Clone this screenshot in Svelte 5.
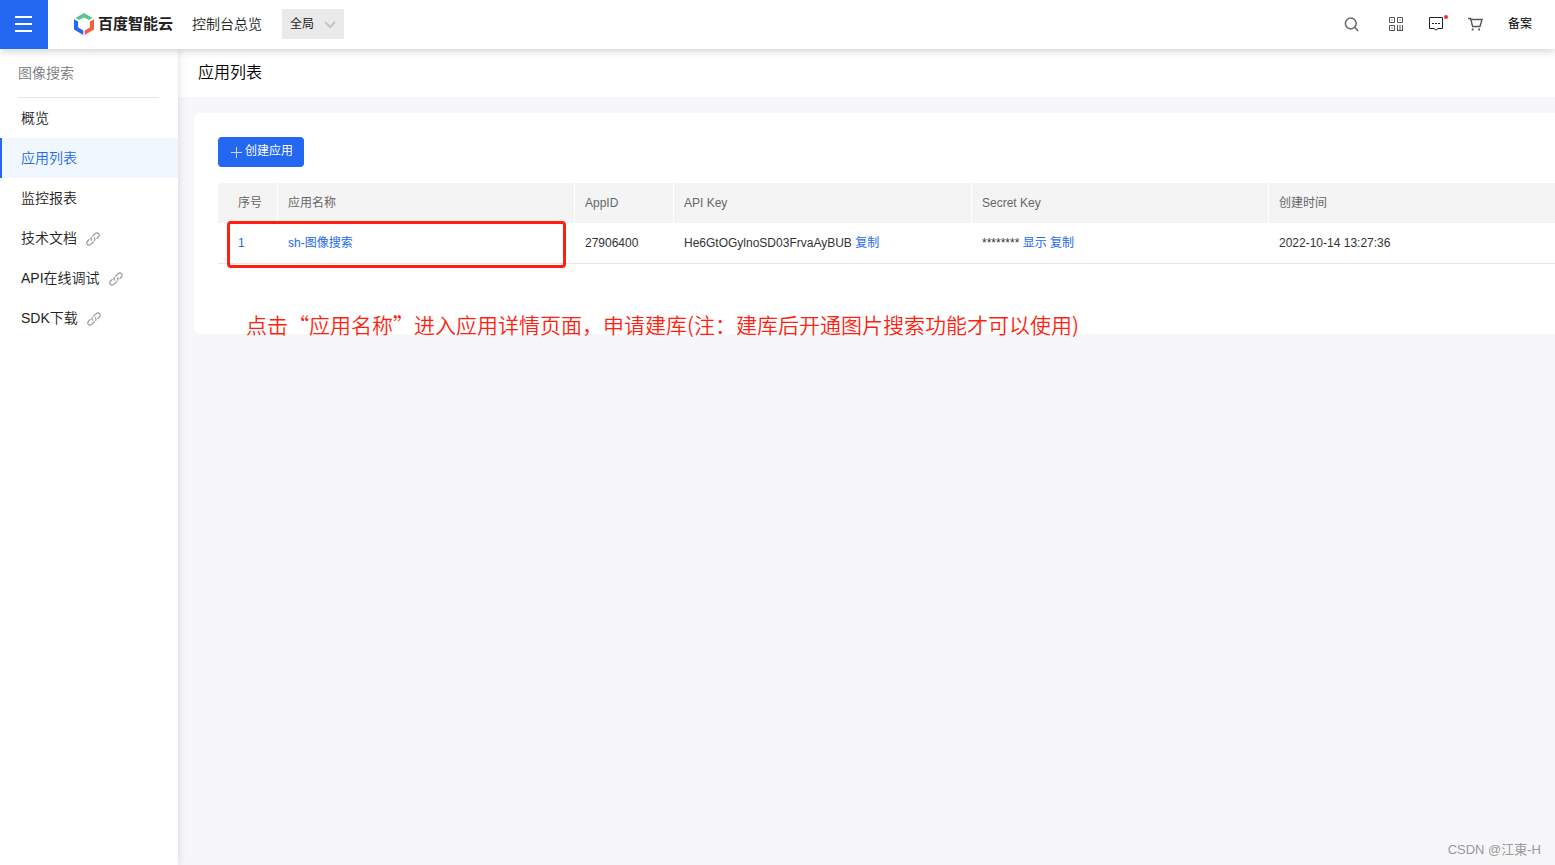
<script lang="ts">
  const menu = [
    { label: '概览', external: false },
    { label: '应用列表', external: false },
    { label: '监控报表', external: false },
    { label: '技术文档', external: true },
    { label: 'API在线调试', external: true },
    { label: 'SDK下载', external: true }
  ];

  const columns = [
    { label: '序号', cls: 'c-index' },
    { label: '应用名称', cls: 'c-name' },
    { label: 'AppID', cls: 'c-appid' },
    { label: 'API Key', cls: 'c-key' },
    { label: 'Secret Key', cls: 'c-secret' },
    { label: '创建时间', cls: 'c-time' }
  ];

  const apps = [
    { id: 1, name: 'sh-图像搜索', appId: '27906400', apiKey: 'He6GtOGylnoSD03FrvaAyBUB', secret: '********', created: '2022-10-14 13:27:36' }
  ];

  let active = $state('应用列表');
  let region = $state('全局');
</script>

<div class="page" lang="zh-CN">
  <header class="top">
    <button class="burger" aria-label="菜单">
      <svg width="18" height="18" viewBox="0 0 18 18" fill="none" stroke="#fff" stroke-width="2">
        <path d="M0 2h17M0 9h17M0 16h17" />
      </svg>
    </button>

    <a class="brand" href="/">
      <svg width="20" height="22" viewBox="0 0 20 22" aria-hidden="true">
        <path fill="#5bc58c" d="M10 0 18.6 4.9 15 7.1 10 4.4 5 7.1 1.4 4.9z" />
        <path fill="#2468f2" d="M0 6.2 4.1 8.6V14.4L9.3 17.5V22L0 16.6z" />
        <path fill="#f0603f" d="M20 6.2V16.6L10.7 22V17.5L15.9 14.4V8.6z" />
      </svg>
      <span>百度智能云</span>
    </a>

    <a class="overview" href="/console">控制台总览</a>

    <div class="region">
      <select bind:value={region} aria-label="区域">
        <option>全局</option>
      </select>
      <svg width="12" height="8" viewBox="0 0 12 8" fill="none" stroke="#c4c4c4" stroke-width="2" aria-hidden="true">
        <path d="M1 1l5 5 5-5" />
      </svg>
    </div>

    <div class="tools">
      <button class="t-search" aria-label="搜索">
        <svg width="16" height="16" viewBox="0 0 16 16" fill="none" stroke="#666" stroke-width="1.5">
          <circle cx="6.800" cy="7.500" r="5.400" />
          <path d="M10.600 11.300l3.600 3.600" />
        </svg>
      </button>
      <button class="t-apps" aria-label="二维码">
        <svg width="14" height="14" viewBox="0 0 14 14" fill="none" stroke="#555">
          <path d="M.5.5h5v5h-5zM8.500.5h5v5h-5zM.5 8.500h5v5h-5z" />
          <path d="M2.500 3h1M10.500 3h1M2.500 11h1M8.500 8v6M11 8v6M13.500 8v6M8 13.500h6" />
        </svg>
      </button>
      <button class="t-msg" aria-label="消息">
        <svg width="14" height="14" viewBox="0 0 14 14" fill="none" stroke="#222">
          <path d="M.5.5h13v11H9L7 13.200 5 11.500H.5z" />
          <path d="M3 6.500h2M6 6.500h2M9 6.500h2" />
        </svg>
        <i class="dot"></i>
      </button>
      <button class="t-cart" aria-label="购物车">
        <svg width="15" height="14" viewBox="0 0 15 14" fill="none" stroke="#555" stroke-width="1.4">
          <path d="M0 1.500h2.600L4.600 9.500H12L14 2.500H3" />
          <path d="M3.800 12.500h1.700M10.300 12.500H12" stroke-width="1.8" />
        </svg>
      </button>
      <a class="beian" href="/beian">备案</a>
    </div>
  </header>

  <div class="body">
    <aside class="side">
      <h2>图像搜索</h2>
      <nav aria-label="图像搜索">
        {#each menu as m (m.label)}
          <a href="#top" class:on={active === m.label} onclick={() => (active = m.label)}>
            {m.label}
            {#if m.external}
              <svg width="14" height="14" viewBox="0 0 14 14" fill="none" stroke="#999" stroke-width="1.2" aria-hidden="true">
                <path d="M6 8.400C4.900 7.600 4.700 6.200 5.600 5.200M6.300 4.500L9 1.800C10 .8 11.500.7 12.500 1.500S13.400 4 12.400 5L10.500 6.900" />
                <path d="M8 5.600C9.100 6.400 9.300 7.800 8.400 8.800M7.700 9.500L5 12.200C4 13.200 2.500 13.300 1.500 12.500S.6 10 1.600 9L3.500 7.100" />
              </svg>
            {/if}
          </a>
        {/each}
      </nav>
    </aside>

    <main>
      <h1>应用列表</h1>

      <section class="panel">
        <button class="create">
          <svg width="11" height="11" viewBox="0 0 11 11" stroke="#c8d9fc" aria-hidden="true">
            <path d="M5.500 0v11M0 5.500h11" />
          </svg>
          <span>创建应用</span>
        </button>

        <table>
          <thead>
            <tr>
              {#each columns as c (c.cls)}
                <th class={c.cls}>{c.label}</th>
              {/each}
            </tr>
          </thead>
          <tbody>
            {#each apps as app (app.id)}
              <tr>
                <td class="num">{app.id}</td>
                <td><a href="#app">{app.name}</a></td>
                <td>{app.appId}</td>
                <td>{app.apiKey} <button class="link">复制</button></td>
                <td>{app.secret} <button class="link">显示</button> <button class="link">复制</button></td>
                <td>{app.created}</td>
              </tr>
            {/each}
          </tbody>
        </table>

        <div class="mark"></div>
        <p class="note">点击“应用名称”进入应用详情页面，申请建库(注：建库后开通图片搜索功能才可以使用)</p>
      </section>
    </main>
  </div>

  <div class="credit">CSDN @江東-H</div>
</div>

<style>
  :global(body) { background: #f7f7f9; }

  .page {
    position: relative; display: flex; flex-direction: column; min-height: 100vh; overflow-x: hidden;
    font-family: "Liberation Sans", "Noto Sans CJK SC", sans-serif; font-size: 12px; line-height: 20px; color: #333;
  }
  * { box-sizing: border-box; }
  a { color: inherit; text-decoration: none; }
  button { font: inherit; color: inherit; background: none; border: 0; padding: 0; cursor: pointer; }
  svg { display: block; flex: none; }

  /* top bar */
  .top {
    position: relative; z-index: 3; display: flex; align-items: center; height: 49px; padding-bottom: 1px;
    background: #fff; box-shadow: 0 2px 8px rgba(0, 20, 20, .2);
  }
  .burger { display: flex; align-items: center; justify-content: center; align-self: flex-start; width: 48px; height: 49px; padding: 0 1px 1px 0; background: #2468f2; }
  .brand { display: flex; align-items: center; gap: 4px; margin-left: 26px; font-size: 15px; font-weight: 700; color: #222; white-space: nowrap; }
  .overview { margin-left: 19px; font-size: 14px; font-weight: 350; color: #222; white-space: nowrap; }
  .region { position: relative; margin-left: 20px; }
  .region select {
    display: block; appearance: none; width: 62px; height: 30px; padding: 0 8px; border: 0; border-radius: 0;
    background: #eaeaea; font: inherit; color: #222;
  }
  .region svg { position: absolute; right: 8px; top: 12px; pointer-events: none; }

  .tools { display: flex; align-items: center; margin-left: auto; padding-right: 23px; color: #000; }
  .t-apps { margin-left: 29px; }
  .t-msg { position: relative; margin-left: 26px; }
  .t-cart { margin-left: 25px; }
  .beian { margin-left: 25px; white-space: nowrap; }
  .dot { position: absolute; top: -2px; right: -5px; width: 4px; height: 4px; border-radius: 50%; background: #f33030; }

  .body { display: flex; flex: 1; }

  /* side menu */
  .side { position: relative; z-index: 2; flex: none; width: 178px; background: #fff; box-shadow: 0 0 8px rgba(0, 0, 0, .14); }
  .side h2 {
    height: 49px; margin: 0 19px 0 18px; border-bottom: 1px solid #e6e6e6;
    font-size: 14px; font-weight: 350; line-height: 48px; color: #777;
  }
  .side nav a {
    display: flex; align-items: center; gap: 9px; height: 40px; padding-left: 19px;
    border-left: 2px solid transparent; font-size: 14px; font-weight: 350; color: #222;
  }
  .side nav a.on { border-left-color: #2468f2; background: #f0f7ff; color: #2468f2; }
  .side nav svg { margin-top: 2px; }

  main { flex: 1; min-width: 0; }
  h1 { margin: 0; height: 48px; padding-left: 20px; background: #fff; font-size: 16px; font-weight: 350; line-height: 48px; color: #000; }

  .panel { position: relative; margin: 16px 0 0 16px; padding: 24px 0 70px 24px; border-radius: 6px 0 0 6px; background: #fff; }
  .create {
    display: flex; align-items: center; justify-content: center; gap: 3px; width: 86px; height: 30px; padding: 0 0 2px 2px;
    border-radius: 4px; background: #2468f2; color: #fff; white-space: nowrap;
  }
  .create svg { margin-top: 2px; }

  table { width: 100%; margin-top: 16px; border-collapse: separate; border-spacing: 0; table-layout: fixed; }
  th, td { height: 40px; padding: 0 10px; border-right: 1px solid #fff; text-align: left; font-weight: 400; white-space: nowrap; }
  th { background: #f4f4f4; color: #666; }
  th:first-child, td:first-child { padding-left: 20px; padding-right: 0; }
  th:last-child, td:last-child { border-right: 0; }
  th:first-child { border-top-left-radius: 4px; }
  td { height: 41px; border-bottom: 1px solid #e8e8e8; }
  td a, .num, .link { color: #2468f2; }
  .c-index { width: 60px; }
  .c-name { width: 297px; }
  .c-appid { width: 99px; }
  .c-key { width: 298px; }
  .c-secret { width: 297px; }

  /* annotation over the panel */
  .mark { position: absolute; left: 33px; top: 108px; width: 339px; height: 47px; border: 3px solid #ff1e10; border-radius: 4px; }
  .note {
    position: absolute; left: 52px; top: 196px; margin: 0; white-space: nowrap;
    font-family: "Noto Sans CJK SC", sans-serif; font-size: 21px; font-weight: 350; line-height: 30px; color: #ff1e10;
  }

  .credit { position: absolute; right: 14px; bottom: 5px; font-size: 13px; line-height: 20px; color: #999; }
</style>
